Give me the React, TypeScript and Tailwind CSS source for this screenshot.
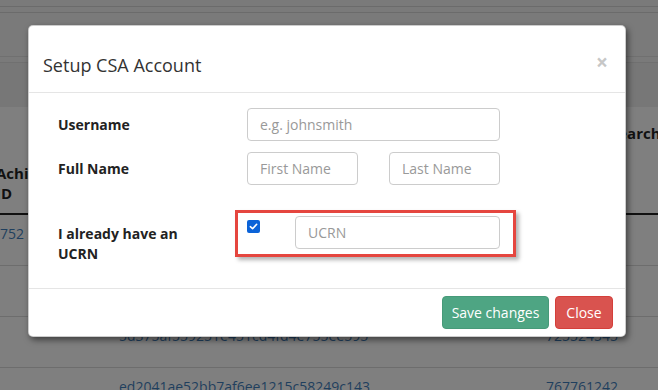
import React from "react";

const font = { fontFamily: '"Open Sans", "Noto Sans", sans-serif' };

function Input({ placeholder, className }: { placeholder: string; className: string }) {
  return (
    <div
      className={`h-[33px] border border-[#cccccc] rounded-[4px] bg-white flex items-center pl-[12px] text-[14px] text-[#999999] ${className}`}
    >
      {placeholder}
    </div>
  );
}

export default function App() {
  return (
    <div
      className="relative w-[658px] h-[390px] overflow-hidden bg-[#7f7f7f]"
      style={font}
    >
      {/* background page (behind overlay) */}
      <div className="flex flex-col">
        <div className="h-[7px] border-b border-[#6b6b6b] bg-[#7a7a7a]" />
        <div className="h-[6px] border-b border-[#6b6b6b] bg-[#7a7a7a]" />
        <div className="h-[44px] border-b border-[#707070] bg-[#7a7a7a]" />
        <div className="h-[6px] border-b border-[#707070] bg-[#7a7a7a]" />
        <div className="h-[44px] bg-[#777777]" />
        {/* table header */}
        <div className="h-[108px] border-b-2 border-[#111111] flex text-[15px] font-bold text-[#111111] leading-[20px]">
          <div className="w-[123px] ml-[-4px] pt-[56px]">
            Achi
            <br />
            ID
          </div>
          <div className="flex-1" />
          <div className="w-[66px] pt-[16px] whitespace-nowrap">Research</div>
        </div>
        {/* rows */}
        {[
          { a: "8752", b: "0f2c8b1e9a7d", c: "" },
          { a: "", b: "", c: "" },
          { a: "", b: "5d375af559251e451cd4fd4e755ee595", c: "725524545" },
          { a: "", b: "ed2041ae52bb7af6ee1215c58249c143", c: "767761242" },
        ].map((r, i) => (
          <div
            key={i}
            className="h-[51px] border-b border-[#6d6d6d] flex text-[14px] leading-[20px] text-[#1f3f5e] pt-[9px] shrink-0"
          >
            <div className="w-[127px] ml-[-8px]">{r.a}</div>
            <div className="w-[427px]">{i === 0 ? "" : r.b}</div>
            <div>{r.c}</div>
          </div>
        ))}
      </div>

      {/* modal */}
      <div className="absolute left-[28px] top-[25px] w-[598px] h-[312px] bg-white rounded-[5px] border border-black/20 shadow-[2px_3px_6px_rgba(0,0,0,0.5)] flex flex-col">
        <div className="h-[67px] shrink-0 border-b border-[#e5e5e5] flex items-center justify-between pl-[14px] pr-[17px] pt-[12px]">
          <div className="text-[18px] text-[#333333]">Setup CSA Account</div>
          <div className="text-[21px] font-bold text-[#c7c7c7] leading-none mt-[-6px]">×</div>
        </div>
        <div className="h-[195px] shrink-0 pl-[29px] pt-[15px] flex flex-col text-[14px] text-[#222222]">
          <div className="flex items-center h-[33px]">
            <div className="w-[189px] font-bold">Username</div>
            <Input placeholder="e.g. johnsmith" className="w-[253px]" />
          </div>
          <div className="flex items-center h-[33px] mt-[11px]">
            <div className="w-[189px] font-bold">Full Name</div>
            <Input placeholder="First Name" className="w-[111px]" />
            <Input placeholder="Last Name" className="w-[111px] ml-[31px]" />
          </div>
          <div className="flex items-start mt-[25px]">
            <div className="w-[177px] font-bold leading-[20px] mt-[14px]">
              I already have an
              <br />
              UCRN
            </div>
            <div className="w-[281px] h-[47px] border-[3px] border-[#e5463f] shadow-[3px_3px_4px_rgba(0,0,0,0.3)] flex items-start">
              <div className="w-[13px] h-[13px] bg-[#0b63d8] rounded-[2px] ml-[9px] mt-[7px] flex items-center justify-center">
                <svg width="9" height="9" viewBox="0 0 10 10" fill="none">
                  <path d="M1.5 5.2 L4 7.5 L8.5 2.5" stroke="white" strokeWidth="1.8" strokeLinecap="round" strokeLinejoin="round" />
                </svg>
              </div>
              <Input placeholder="UCRN" className="w-[205px] ml-[35px] mt-[3px]" />
            </div>
          </div>
        </div>
        <div className="flex-1 border-t border-[#e5e5e5] flex items-center justify-end pr-[12px] gap-[6px]">
          <div className="h-[33px] w-[107px] rounded-[4px] bg-[#4ea583] border border-[#479a79] text-white text-[14px] flex items-center justify-center">
            Save changes
          </div>
          <div className="h-[33px] w-[58px] rounded-[4px] bg-[#d9534f] border border-[#d43f3a] text-white text-[14px] flex items-center justify-center">
            Close
          </div>
        </div>
      </div>
    </div>
  );
}
